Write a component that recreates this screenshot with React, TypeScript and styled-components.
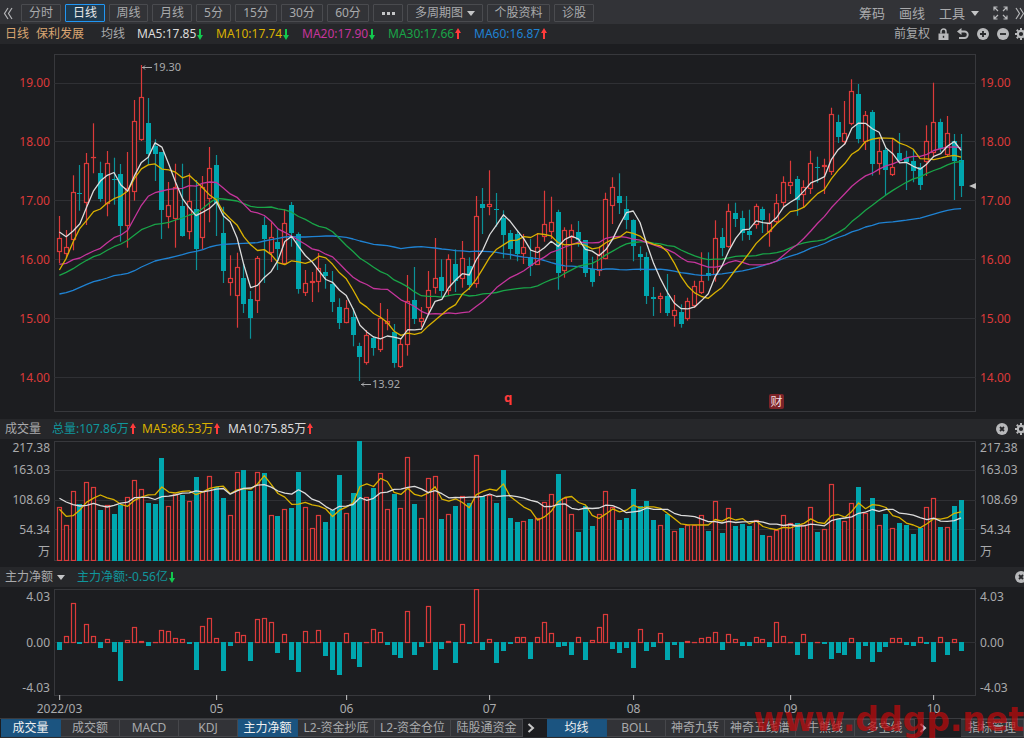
import React from "react";
import styled, { createGlobalStyle } from "styled-components";

const palette = {
  page: "#1c1d20",
  bar: "#26272a",
  toolbar: "#323337",
  edge: "#4a4b4f",
  grid: "#2f3034",
  text: "#a9aaac",
  red: "#dc3a3a",
  hotRed: "#ff3b3b",
  teal: "#00a6ae",
  tealText: "#10969c",
  white: "#dcdcdc",
  yellow: "#d9b100",
  magenta: "#c5359c",
  green: "#19a548",
  blue: "#1f82d2",
  tan: "#d9a571",
};

const GlobalStyle = createGlobalStyle`
  * { box-sizing: border-box; }
  body {
    margin: 0;
    background: ${palette.page};
    color: ${palette.text};
    font: 12px/18px "Noto Sans", "Noto Sans CJK SC", sans-serif;
    overflow-x: hidden;
  }
  button, select { font: inherit; color: inherit; cursor: pointer; }
`;

/* ---------- market data ---------- */

type Candle = { high: number; top: number; bottom: number; low: number; up: boolean };
type Row = [number, number, number, number, 0 | 1];

// Rows are high, body top, body bottom, low, rising; in thirds of a chart unit, measured from `base`.
const runs: { base: number; rows: Row[] }[] = [
  {
    base: -12,
    rows: [
      [498, 565, 606, 640, 1], [540, 591, 611, 625, 1], [376, 427, 571, 601, 1], [345, 429, 431, 482, 0],
      [309, 340, 460, 525, 1], [220, 323, 325, 370, 1], [335, 370, 446, 455, 0], [303, 340, 463, 499, 1],
      [323, 387, 389, 464, 0], [342, 373, 527, 575, 0], [306, 415, 527, 593, 1], [150, 213, 425, 452, 1],
      [45, 142, 269, 273, 1], [144, 220, 312, 345, 0], [268, 288, 311, 393, 0], [306, 306, 479, 567, 0],
      [396, 465, 500, 535, 1], [341, 412, 508, 593, 1], [341, 467, 557, 560, 0], [370, 454, 545, 568, 1],
      [390, 476, 596, 660, 0], [378, 412, 563, 598, 1], [291, 356, 448, 517, 1], [315, 345, 460, 558, 0],
      [470, 549, 663, 699, 0], [616, 685, 698, 737, 1], [608, 652, 739, 833, 1], [640, 684, 762, 789, 0],
      [723, 748, 804, 866, 0], [618, 626, 752, 789, 1], [500, 525, 567, 699, 0], [517, 562, 608, 636, 1],
      [538, 575, 597, 660, 0], [478, 520, 641, 644, 1],
    ],
  },
  {
    base: 408,
    rows: [
      [36, 44, 129, 170, 0], [127, 132, 296, 311, 0], [240, 280, 310, 318, 1], [246, 274, 280, 336, 1],
      [189, 235, 277, 307, 1], [222, 246, 258, 296, 0], [243, 282, 337, 366, 0], [325, 351, 399, 417, 0],
      [330, 355, 398, 400, 1], [355, 381, 436, 469, 0], [458, 468, 501, 573, 0], [420, 437, 520, 524, 1],
      [438, 443, 474, 497, 0], [339, 384, 479, 486, 1], [357, 394, 402, 421, 1], [402, 425, 519, 533, 0],
      [444, 463, 532, 534, 1], [255, 334, 464, 497, 1], [231, 331, 387, 402, 0], [351, 385, 395, 411, 1],
      [243, 300, 353, 371, 1], [144, 265, 293, 311, 1], [208, 261, 304, 320, 0], [193, 208, 304, 315, 1],
      [178, 223, 273, 306, 0], [153, 205, 268, 293, 1], [202, 228, 285, 300, 0], [18, 79, 283, 293, 1],
      [-6, 43, 55, 132, 0], [-59, 43, 52, 76, 1], [9, 56, 60, 110, 0], [61, 84, 135, 205, 0],
    ],
  },
  {
    base: 288,
    rows: [
      [240, 249, 296, 328, 0], [240, 252, 312, 334, 0], [252, 291, 311, 342, 1], [267, 320, 348, 378, 0],
      [249, 291, 344, 345, 1], [122, 223, 260, 275, 1], [140, 217, 245, 267, 1], [179, 187, 369, 419, 0],
      [232, 241, 363, 383, 1], [223, 241, 265, 336, 1], [213, 246, 269, 290, 0], [270, 270, 369, 381, 0],
      [320, 356, 396, 410, 0], [290, 312, 363, 378, 1], [128, 148, 326, 328, 1], [82, 112, 169, 222, 1],
      [70, 138, 158, 192, 0], [138, 177, 210, 238, 0], [208, 211, 287, 334, 0], [289, 313, 321, 363, 0],
      [307, 322, 439, 462, 0], [411, 440, 447, 498, 0], [428, 439, 446, 489, 1], [372, 439, 489, 498, 0],
      [435, 481, 497, 530, 1], [463, 486, 521, 533, 0], [443, 454, 508, 512, 1], [392, 409, 469, 474, 1],
      [307, 394, 430, 432, 1], [307, 369, 377, 392, 0], [211, 265, 376, 395, 1], [234, 261, 293, 319, 0],
      [161, 184, 291, 293, 1], [158, 190, 207, 231, 0], [182, 205, 249, 272, 0],
    ],
  },
  {
    base: 18,
    rows: [
      [449, 512, 524, 540, 0], [431, 440, 494, 506, 1], [440, 446, 481, 519, 0], [460, 489, 516, 560, 1],
      [402, 429, 485, 490, 1], [349, 367, 430, 440, 1], [302, 367, 378, 402, 1], [348, 357, 419, 467, 0],
      [361, 381, 404, 443, 1], [272, 310, 386, 402, 1], [290, 322, 324, 368, 0], [296, 317, 320, 402, 1],
      [143, 162, 337, 345, 1], [164, 186, 232, 249, 0], [123, 220, 245, 255, 1], [58, 94, 193, 196, 1],
      [72, 102, 238, 250, 0], [153, 166, 247, 270, 1], [150, 156, 312, 347, 0], [235, 274, 311, 344, 1],
      [260, 269, 331, 405, 0], [235, 323, 345, 348, 1], [219, 278, 303, 307, 0], [272, 293, 305, 390, 0],
      [268, 302, 332, 367, 0], [309, 320, 375, 390, 0], [196, 244, 306, 348, 1], [68, 188, 280, 290, 1],
      [176, 187, 267, 277, 0], [168, 220, 284, 290, 1], [222, 243, 303, 420, 0], [222, 299, 378, 411, 0],
    ],
  },
];

const candles: Candle[] = runs.flatMap(({ base, rows }) =>
  rows.map(([high, top, bottom, low, up]) => ({
    high: (high + base) / 3,
    top: (top + base) / 3,
    bottom: (bottom + base) / 3,
    low: (low + base) / 3,
    up: up === 1,
  }))
);

// Averages that reach back before the first visible session.
const lead = {
  ma5: [546, 560, 543, 521],
  ma10: [660, 625, 576, 535, 511, 485, 477, 459, 446],
  ma20: [643, 640, 629, 624, 613, 603, 595, 578, 563, 555, 541, 503, 466, 439, 428, 423, 418, 416, 415],
  ma30: [
    676, 667, 656, 643, 631, 620, 613, 601, 590, 582, 571, 555, 539, 531, 523, 521, 517, 510, 504, 495, 490, 475,
    458, 445, 447, 450, 453, 461, 469,
  ],
  ma60: [
    732, 728, 721, 712, 703, 695, 690, 684, 677, 674, 670, 662, 651, 642, 633, 628, 624, 619, 614, 608, 604, 599,
    591, 586, 583, 582, 581, 580, 579, 578, 573, 569, 565, 561, 560, 561, 561, 560, 559, 558, 558, 560, 562, 567,
    573, 578, 583, 585, 587, 591, 596, 593, 591, 590, 592, 594, 597, 599, 602,
  ],
  vol5: [283, 304, 302, 285],
  vol10: [250, 261, 269, 273, 271, 265, 272, 276, 271],
};

const volumes = [
  277, 331, 229, 267, 202, 217, 285, 271, 296, 270, 247, 195, 223, 264, 267, 129, 273, 237, 240, 258, 187, 230,
  185, 217, 249, 300, 171, 165, 228, 171, 174, 302, 302, 282, 279, 171, 277, 340, 300, 322, 285, 181, 295, 235,
  76, 247, 219, 174, 282, 237, 279, 126, 267, 309, 189, 185, 313, 297, 273, 244, 264, 121, 244, 240, 264, 165,
  310, 322, 320, 313, 311, 262, 238, 177, 249, 297, 351, 273, 334, 297, 229, 276, 316, 310, 222, 273, 258, 316,
  331, 297, 349, 340, 331, 330, 300, 349, 258, 355, 279, 334, 328, 334, 315, 361, 364, 345, 300, 325, 325, 331,
  277, 352, 343, 208, 312, 318, 265, 217, 294, 250, 330, 296, 340, 325, 331, 358, 340, 277, 250, 337, 337, 273,
  255,
].map((v) => (v - 78) / 3);

const flows = [
  254, 213, 115, 236, 177, 213, 248, 222, 260, 348, 225, 186, 228, 242, 231, 195, 198, 219, 222, 238, 316, 183,
  160, 219, 318, 242, 201, 210, 288, 162, 160, 172, 263, 207, 284, 321, 198, 231, 195, 272, 316, 329, 204, 283,
  306, 231, 192, 201, 239, 269, 278, 139, 269, 245, 124, 316, 251, 228, 294, 177, 236, 72, 254, 224, 294, 257,
  236, 216, 216, 283, 216, 171, 204, 245, 242, 271, 216, 286, 225, 186, 147, 251, 263, 248, 309, 192, 257, 245,
  204, 286, 239, 280, 228, 231, 219, 216, 201, 254, 207, 222, 242, 242, 216, 222, 245, 171, 213, 231, 271, 207,
  283, 231, 238, 283, 263, 269, 219, 283, 242, 292, 260, 245, 219, 219, 239, 242, 216, 236, 292, 216, 271, 222,
  257,
].map((v) => (v - 72) / 3);

const months: [number, string][] = [
  [0, "2022/03"], [23, "05"], [42, "06"], [63, "07"], [84, "08"], [107, "09"], [128, "10"],
];

const WIDTH = 922;
const xAt = (i: number) => 5.4 + i * 6.831;
const column = (i: number) => Math.floor(xAt(i)) + 0.5;
const snap = (v: number) => Math.floor(v) + 0.5;
const percent = (x: number) => `${(x / WIDTH) * 100}%`;

const closes = candles.map((c) => (c.up ? c.top : c.bottom));

function average(values: number[], span: number, early: number[]) {
  return values.map((_, i) => {
    if (i < early.length) return early[i];
    const part = values.slice(Math.max(0, i - span + 1), i + 1);
    return part.reduce((a, b) => a + b, 0) / part.length;
  });
}

const priceLead = (rows: number[]) => rows.map((v) => (v - 12) / 3);
const volumeLead = (rows: number[]) => rows.map((v) => (v - 78) / 3);

/* ---------- frame ---------- */

const Screen = styled.main`
  display: flex;
  flex-direction: column;
  position: relative;
  overflow: hidden;
`;

const Toolbar = styled.header`
  display: flex;
  align-items: center;
  height: 24px;
  padding: 2px 0 0 3px;
  background: ${palette.toolbar};
`;

const PeriodList = styled.nav`
  display: flex;
  gap: 4px;
`;

const PeriodButton = styled.button<{ $width: number; $active?: boolean }>`
  display: flex;
  align-items: center;
  justify-content: center;
  width: ${(p) => p.$width}px;
  height: 18px;
  padding: 0;
  line-height: 16px;
  border: 1px solid ${(p) => (p.$active ? "#2196f3" : palette.edge)};
  border-radius: 1px;
  background: ${(p) => (p.$active ? "#1f3b50" : "transparent")};
  color: ${(p) => (p.$active ? "#e8e8e8" : palette.text)};
`;

const SelectBox = styled.label<{ $framed?: boolean }>`
  display: flex;
  align-items: center;
  gap: 4px;
  height: 18px;
  margin-right: ${(p) => (p.$framed ? "0" : "12px")};
  padding: ${(p) => (p.$framed ? "0 7px" : "0")};
  border: ${(p) => (p.$framed ? `1px solid ${palette.edge}` : "0")};
  border-radius: 1px;
`;

const Select = styled.select`
  appearance: none;
  width: 48px;
  height: 16px;
  padding: 0;
  border: 0;
  background: transparent;
  line-height: 16px;
`;

const Spacer = styled.div`
  flex: 1;
`;

const ToolButton = styled.button`
  display: flex;
  align-items: center;
  gap: 6px;
  margin-right: 14px;
  padding: 0;
  border: 0;
  background: transparent;
  font-size: 13px;
  white-space: nowrap;
`;

const IconButton = styled.button<{ $width: number }>`
  display: flex;
  align-items: center;
  flex: none;
  width: ${(p) => p.$width}px;
  height: 16px;
  padding: 0;
  border: 0;
  overflow: hidden;
  background: transparent;
  color: #b8b9bb;
  svg { flex: none; }
`;

const InfoBar = styled.div`
  display: flex;
  align-items: center;
  flex: none;
  height: 20px;
  padding-left: 5px;
  background: ${palette.bar};
  white-space: nowrap;
  overflow: hidden;
`;

const Label = styled.span<{ $gap: number; $color?: string }>`
  margin-right: ${(p) => p.$gap}px;
  color: ${(p) => p.$color ?? palette.text};
`;

const Reading = styled.span<{ $width: number; $color: string }>`
  display: flex;
  align-items: center;
  gap: 1px;
  width: ${(p) => p.$width}px;
  color: ${(p) => p.$color};
`;

/* ---------- chart panes ---------- */

const Pane = styled.section<{ $above: number; $below: number }>`
  display: flex;
  padding: ${(p) => p.$above}px 0 ${(p) => p.$below}px;
`;

const Plot = styled.div`
  position: relative;
  flex: 1;
  min-width: 0;
`;

const Drawing = styled.svg<{ $height: number }>`
  display: block;
  width: 100%;
  height: ${(p) => p.$height}px;
`;

const Gutter = styled.div<{ $side: "left" | "right" }>`
  flex: none;
  width: ${(p) => (p.$side === "left" ? 54 : 48)}px;
  padding: ${(p) => (p.$side === "left" ? "0 4px 0 0" : "0 0 0 4px")};
  text-align: ${(p) => (p.$side === "left" ? "right" : "left")};
`;

const PriceScale = styled(Gutter)`
  display: flex;
  flex-direction: column;
  justify-content: space-between;
  padding-top: 20px;
  padding-bottom: 25px;
  color: ${palette.red};
`;

const VolumeScale = styled(Gutter)`
  display: grid;
  grid-template-rows: 14px 30px 30px 30px 14px;
  align-items: center;
`;

const FlowScale = styled(Gutter)`
  display: flex;
  flex-direction: column;
  justify-content: space-between;
  line-height: 16px;
`;

const Note = styled.span`
  position: absolute;
  display: flex;
  align-items: center;
  gap: 1px;
  font-size: 11px;
  line-height: 14px;
`;

const EventLetter = styled.span`
  position: absolute;
  top: 335px;
  font-weight: 700;
  font-size: 13px;
  line-height: 16px;
  color: ${palette.hotRed};
`;

const EventBadge = styled.span`
  position: absolute;
  top: 340px;
  width: 15px;
  height: 15px;
  border-radius: 2px;
  background: #7c2328;
  color: #f2dcdc;
  font-size: 12px;
  line-height: 15px;
  text-align: center;
`;

const LastPrice = styled.svg`
  position: absolute;
  right: 0;
  top: 128px;
`;

const TimeAxis = styled.div`
  position: relative;
  flex: none;
  height: 22px;
  margin: 0 48px 0 54px;
`;

const Month = styled.span`
  position: absolute;
  top: -1px;
  display: flex;
  flex-direction: column;
  align-items: center;
  line-height: 18px;
  transform: translateX(-50%);
  &::before {
    content: "";
    width: 1px;
    height: 5px;
    background: #c8c8c8;
  }
`;

/* ---------- bottom tabs ---------- */

const TabBar = styled.footer`
  display: flex;
  align-items: stretch;
  justify-content: space-between;
  height: 20px;
  padding-left: 1px;
  border-top: 1px solid #3a3b3f;
  border-bottom: 1px solid #2a2b2e;
  overflow: hidden;
`;

const TabGroups = styled.div`
  display: flex;
  gap: 8px;
`;

const TabGroup = styled.div`
  display: flex;
`;

const Tab = styled.button<{ $width: number; $active?: boolean }>`
  flex: none;
  width: ${(p) => p.$width}px;
  padding: 0;
  border: 1px solid ${(p) => (p.$active ? "#1b527c" : "#46474b")};
  border-left-width: 0;
  background: ${(p) => (p.$active ? "#1b5480" : palette.toolbar)};
  color: ${(p) => (p.$active ? "#f0f0f0" : palette.text)};
  line-height: 16px;
  white-space: nowrap;
  overflow: hidden;
`;

const TabArrow = styled.button`
  display: flex;
  align-items: center;
  justify-content: center;
  flex: none;
  width: 16px;
  padding: 0;
  border: 0;
  background: transparent;
  color: #c8c8c8;
`;

const Watermark = styled.div`
  position: absolute;
  right: 0;
  bottom: -2px;
  color: rgba(190, 10, 12, 0.72);
  font: 700 33px/40px "DejaVu Sans", sans-serif;
  pointer-events: none;
`;

/* ---------- icons ---------- */

const Arrow = ({ up }: { up?: boolean }) => (
  <svg width="6" height="12" viewBox="0 0 6 12" fill={up ? palette.hotRed : "#12c84e"}>
    {up ? <path d="M3 0 6 5H4v6H2V5H0z" /> : <path d="M3 12 6 7H4V1H2v6H0z" />}
  </svg>
);

const Caret = () => (
  <svg width="8" height="5" viewBox="0 0 8 5" fill="#c4c5c7">
    <path d="M0 0h8L4 5z" />
  </svg>
);

const Chevrons = ({ flip }: { flip?: boolean }) => (
  <svg width="10" height="13" viewBox="0 0 10 13" fill="none" stroke="#b4b5b7" strokeWidth="1.2">
    <path d={flip ? "M1 1l3.5 5.5L1 12M5 1l3.5 5.5L5 12" : "M5 1 1.5 6.5 5 12M9 1 5.5 6.5 9 12"} />
  </svg>
);

const Expand = () => (
  <svg width="15" height="14" viewBox="0 0 15 14" fill="none" stroke="currentColor" strokeWidth="1.2">
    <path d="M1 4.500V1h3.500M1 1l4 4M10.500 1H14v3.500M14 1l-4 4M1 9.500V13h3.500M1 13l4-4M10.500 13H14V9.500M14 13l-4-4" />
  </svg>
);

const Lock = () => (
  <svg width="11" height="12" viewBox="0 0 11 12">
    <path d="M3 5.500V3.500a2.500 2.500 0 0 1 5 0V6" fill="none" stroke="currentColor" strokeWidth="1.500" />
    <path d="M.5 5.500h10V12H.5z" fill="currentColor" />
    <path d="M4.800 7.800h1.400v2H4.800z" fill={palette.bar} />
  </svg>
);

const Undo = () => (
  <svg width="12" height="12" viewBox="0 0 12 12">
    <path d="M3 3.500h4.500a3.200 3.200 0 0 1 0 6.500H2" fill="none" stroke="currentColor" strokeWidth="1.900" />
    <path d="M0 3.500 4.500 0v7z" fill="currentColor" />
  </svg>
);

const Disc = ({ mark }: { mark: string }) => (
  <svg width="12" height="12" viewBox="0 0 12 12">
    <circle cx="6" cy="6" r="6" fill="currentColor" />
    <path d={mark} stroke={palette.bar} strokeWidth="1.800" />
  </svg>
);

const Gear = () => (
  <svg width="12" height="12" viewBox="0 0 12 12" stroke="currentColor" fill="none">
    <circle cx="6" cy="6" r="3.200" strokeWidth="2.200" />
    <path d="M6 0v2M6 10v2M0 6h2M10 6h2M1.800 1.800l1.400 1.400M8.800 8.800l1.400 1.400M1.800 10.200l1.400-1.400M8.800 3.200l1.400-1.400" strokeWidth="2" />
  </svg>
);

const Next = () => (
  <svg width="8" height="10" viewBox="0 0 8 10" fill="none" stroke="currentColor" strokeWidth="2">
    <path d="M1.500 1 6 5 1.500 9" />
  </svg>
);

const LeftArrow = () => (
  <svg width="10" height="5" viewBox="0 0 10 5" fill="none" stroke="currentColor">
    <path d="M0 2.500h10M3 .5l-2 2 2 2" />
  </svg>
);

/* ---------- drawings ---------- */

const Frame = ({ height, lines }: { height: number; lines: number[] }) => (
  <g stroke={palette.grid} fill="none">
    <rect x="0.500" y="0.500" width={WIDTH - 1} height={height - 1} stroke="#37383c" />
    {lines.map((y) => (
      <path key={y} d={`M0 ${y}H${WIDTH}`} />
    ))}
  </g>
);

const Line = ({ values, color }: { values: number[]; color: string }) => (
  <polyline
    points={values.map((v, i) => `${xAt(i).toFixed(1)},${v.toFixed(1)}`).join(" ")}
    fill="none"
    stroke={color}
    strokeWidth="1.300"
    strokeLinejoin="round"
  />
);

const Bar = ({ i, top, bottom, up }: { i: number; top: number; bottom: number; up: boolean }) => {
  const x = column(i);
  if (!up) {
    const y = Math.round(top);
    return <rect x={x - 2.5} y={y} width="5" height={Math.max(1, Math.round(bottom) - y)} fill={palette.teal} />;
  }
  const y = snap(top);
  return (
    <rect
      x={x - 2}
      y={y}
      width="4"
      height={Math.max(0.1, snap(bottom - 0.5) - y)}
      fill={palette.page}
      stroke={palette.red}
      strokeWidth="1.200"
    />
  );
};

const PriceChart = () => (
  <Drawing $height={358} viewBox={`0 0 ${WIDTH} 358`} preserveAspectRatio="none" role="img" aria-label="日线">
    <Frame height={358} lines={[29.5, 87.5, 146.5, 205.5, 264.5, 323.5]} />
    {candles.map((c, i) => (
      <g key={i}>
        <path
          d={`M${column(i)} ${c.high.toFixed(1)}V${c.low.toFixed(1)}`}
          stroke={c.up ? palette.red : "#0b9198"}
          strokeWidth="1.200"
        />
        <Bar i={i} top={c.top} bottom={c.bottom} up={c.up} />
      </g>
    ))}
    <Line values={average(closes, 60, priceLead(lead.ma60))} color={palette.blue} />
    <Line values={average(closes, 30, priceLead(lead.ma30))} color={palette.green} />
    <Line values={average(closes, 20, priceLead(lead.ma20))} color={palette.magenta} />
    <Line values={average(closes, 10, priceLead(lead.ma10))} color={palette.yellow} />
    <Line values={average(closes, 5, priceLead(lead.ma5))} color={palette.white} />
  </Drawing>
);

const VolumeChart = () => (
  <Drawing $height={120} viewBox={`0 0 ${WIDTH} 120`} preserveAspectRatio="none" role="img" aria-label="成交量">
    <Frame height={120} lines={[29.5, 59.5, 88.5]} />
    {volumes.map((v, i) => (
      <Bar key={i} i={i} top={v} bottom={120} up={candles[i].up} />
    ))}
    <Line values={average(volumes, 5, volumeLead(lead.vol5))} color={palette.yellow} />
    <Line values={average(volumes, 10, volumeLead(lead.vol10))} color={palette.white} />
  </Drawing>
);

const ZERO = 53;

const FlowChart = () => (
  <Drawing $height={107} viewBox={`0 0 ${WIDTH} 107`} preserveAspectRatio="none" role="img" aria-label="主力净额">
    <Frame height={107} lines={[ZERO + 0.5]} />
    {flows.map((v, i) => (
      <Bar key={i} i={i} top={Math.min(v, ZERO)} bottom={v > ZERO ? v : ZERO + 1} up={v <= ZERO} />
    ))}
  </Drawing>
);

/* ---------- page ---------- */

const periods: { name: string; width: number; active?: boolean }[] = [
  { name: "分时", width: 40 },
  { name: "日线", width: 40, active: true },
  { name: "周线", width: 39 },
  { name: "月线", width: 40 },
  { name: "5分", width: 35 },
  { name: "15分", width: 42 },
  { name: "30分", width: 42 },
  { name: "60分", width: 42 },
];

const averages: { text: string; width: number; color: string; up?: boolean }[] = [
  { text: "MA5:17.85", width: 79, color: palette.white },
  { text: "MA10:17.74", width: 86, color: palette.yellow },
  { text: "MA20:17.90", width: 86, color: palette.magenta },
  { text: "MA30:17.66", width: 86, color: palette.green, up: true },
  { text: "MA60:16.87", width: 86, color: palette.blue, up: true },
];

const leftTabs: [string, number, boolean?][] = [
  ["成交量", 60, true], ["成交额", 59], ["MACD", 59], ["KDJ", 59], ["主力净额", 60, true],
  ["L2-资金抄底", 77], ["L2-资金仓位", 76], ["陆股通资金", 72],
];

const rightTabs: [string, number, boolean?][] = [
  ["均线", 60, true], ["BOLL", 59], ["神奇九转", 59], ["神奇五线谱", 71], ["牛熊线", 59], ["多空线", 60],
];

const priceTicks = ["19.00", "18.00", "17.00", "16.00", "15.00", "14.00"];
const volumeTicks = ["217.38", "163.03", "108.69", "54.34", "万"];
const flowTicks = ["4.03", "0.00", "-4.03"];

const ticks = (labels: string[]) => labels.map((t) => <span key={t}>{t}</span>);

export default function App() {
  return (
    <Screen>
      <GlobalStyle />
      <Toolbar>
        <IconButton $width={18} aria-label="收起">
          <Chevrons />
        </IconButton>
        <PeriodList>
          {periods.map((p) => (
            <PeriodButton key={p.name} $width={p.width} $active={p.active}>
              {p.name}
            </PeriodButton>
          ))}
          <PeriodButton $width={30} aria-label="更多周期">
            <svg width="13" height="3" viewBox="0 0 13 3" fill="#c4c5c7">
              <path d="M0 0h3v3H0zM5 0h3v3H5zM10 0h3v3h-3z" />
            </svg>
          </PeriodButton>
          <SelectBox $framed>
            <Select aria-label="多周期图">
              <option>多周期图</option>
            </Select>
            <Caret />
          </SelectBox>
          <PeriodButton $width={63}>个股资料</PeriodButton>
          <PeriodButton $width={40}>诊股</PeriodButton>
        </PeriodList>
        <Spacer />
        <ToolButton>筹码</ToolButton>
        <ToolButton>画线</ToolButton>
        <ToolButton aria-haspopup="menu">
          工具
          <Caret />
        </ToolButton>
        <IconButton $width={22} aria-label="全屏">
          <Expand />
        </IconButton>
        <IconButton $width={9} aria-label="展开">
          <Chevrons flip />
        </IconButton>
      </Toolbar>

      <InfoBar>
        <Label $gap={7} $color={palette.tan}>日线</Label>
        <Label $gap={17} $color={palette.tan}>保利发展</Label>
        <Label $gap={12}>均线</Label>
        {averages.map((a) => (
          <Reading key={a.text} $width={a.width} $color={a.color}>
            {a.text}
            <Arrow up={a.up} />
          </Reading>
        ))}
        <Spacer />
        <Label $gap={8}>前复权</Label>
        <IconButton $width={19} aria-label="锁定"><Lock /></IconButton>
        <IconButton $width={20} aria-label="撤销"><Undo /></IconButton>
        <IconButton $width={20} aria-label="放大"><Disc mark="M6 3v6M3 6h6" /></IconButton>
        <IconButton $width={18} aria-label="缩小"><Disc mark="M3 6h6" /></IconButton>
        <IconButton $width={9} aria-label="设置"><Gear /></IconButton>
      </InfoBar>

      <Pane $above={10} $below={7}>
        <PriceScale $side="left">{ticks(priceTicks)}</PriceScale>
        <Plot>
          <PriceChart />
          <Note style={{ left: percent(88), top: 6 }}>
            <LeftArrow />
            19.30
          </Note>
          <Note style={{ left: percent(307), top: 323 }}>
            <LeftArrow />
            13.92
          </Note>
          <EventLetter style={{ left: percent(450) }}>q</EventLetter>
          <EventBadge style={{ left: percent(715) }}>财</EventBadge>
          <LastPrice width="7" height="8" viewBox="0 0 7 8" fill="#c0c0c0">
            <path d="M0 4 7 1v6z" />
          </LastPrice>
        </Plot>
        <PriceScale $side="right">{ticks(priceTicks)}</PriceScale>
      </Pane>

      <InfoBar>
        <Label $gap={11}>成交量</Label>
        <Reading $width={90} $color={palette.tealText}>总量:107.86万<Arrow up /></Reading>
        <Reading $width={86} $color={palette.yellow}>MA5:86.53万<Arrow up /></Reading>
        <Reading $width={90} $color={palette.white}>MA10:75.85万<Arrow up /></Reading>
        <Spacer />
        <IconButton $width={19} aria-label="关闭成交量"><Disc mark="M4 4l4 4M8 4l-4 4" /></IconButton>
        <IconButton $width={9} aria-label="成交量设置"><Gear /></IconButton>
      </InfoBar>
      <Pane $above={2} $below={6}>
        <VolumeScale $side="left">{ticks(volumeTicks)}</VolumeScale>
        <Plot>
          <VolumeChart />
        </Plot>
        <VolumeScale $side="right">{ticks(volumeTicks)}</VolumeScale>
      </Pane>

      <InfoBar>
        <SelectBox>
          <Select aria-label="指标">
            <option>主力净额</option>
          </Select>
          <Caret />
        </SelectBox>
        <Reading $width={110} $color={palette.tealText}>主力净额:-0.56亿<Arrow /></Reading>
        <Spacer />
        <IconButton $width={9} aria-label="关闭主力净额"><Disc mark="M4 4l4 4M8 4l-4 4" /></IconButton>
      </InfoBar>
      <Pane $above={2} $below={0}>
        <FlowScale $side="left">{ticks(flowTicks)}</FlowScale>
        <Plot>
          <FlowChart />
        </Plot>
        <FlowScale $side="right">{ticks(flowTicks)}</FlowScale>
      </Pane>
      <TimeAxis>
        {months.map(([i, name]) => (
          <Month key={name} style={{ left: percent(column(i)) }}>{name}</Month>
        ))}
      </TimeAxis>

      <TabBar>
        <TabGroups>
          <TabGroup>
            {leftTabs.map(([name, width, active]) => (
              <Tab key={name} $width={width} $active={active}>{name}</Tab>
            ))}
            <TabArrow aria-label="更多指标"><Next /></TabArrow>
          </TabGroup>
          <TabGroup>
            {rightTabs.map(([name, width, active]) => (
              <Tab key={name} $width={width} $active={active}>{name}</Tab>
            ))}
            <TabArrow aria-label="更多均线"><Next /></TabArrow>
          </TabGroup>
        </TabGroups>
        <Tab $width={63}>指标管理</Tab>
      </TabBar>
      <Watermark>www.ddgp.net</Watermark>
    </Screen>
  );
}
